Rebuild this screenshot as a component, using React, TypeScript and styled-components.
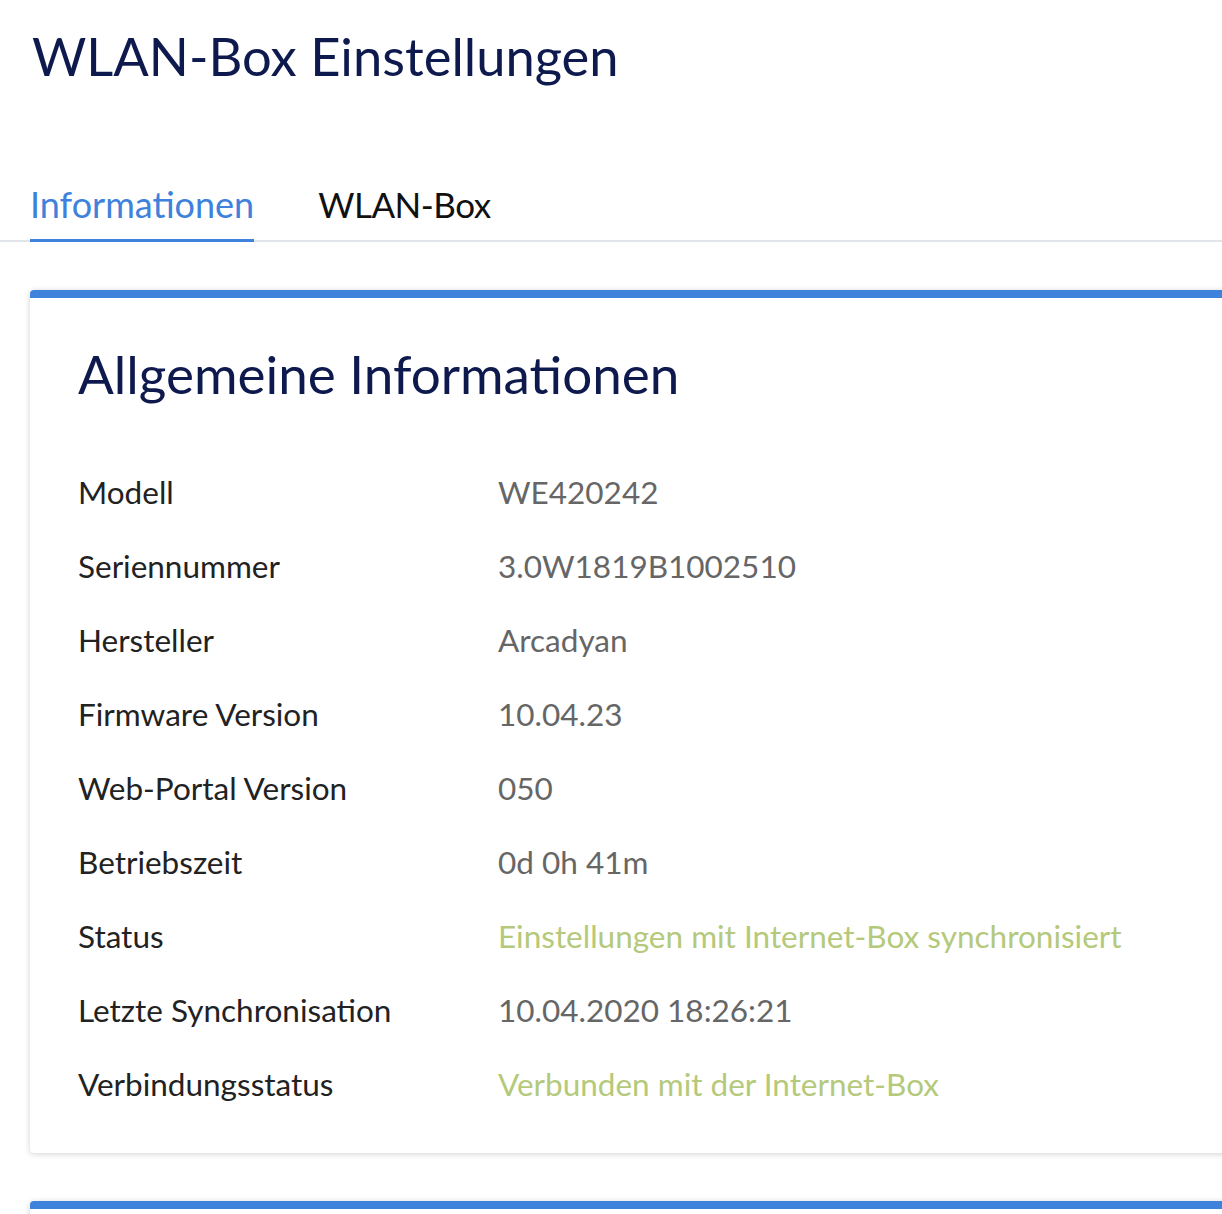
import React from "react";
import styled, { createGlobalStyle } from "styled-components";

const Global = createGlobalStyle`
  html, body { margin: 0; padding: 0; background: #fff; }
  body { font-family: Lato, "Open Sans", sans-serif; overflow: hidden; }
`;

const Page = styled.div`
  width: 100%;
  overflow: hidden;
`;

const Title = styled.h1`
  margin: 0;
  padding: 22px 0 0 32px;
  font-weight: 400;
  font-size: 52.5px;
  line-height: 68px;
  color: #0e1a4d;
`;

const TabBar = styled.div`
  display: flex;
  gap: 64px;
  margin-top: 92px;
  padding-left: 30px;
  border-bottom: 2px solid #e1e4e8;
`;

const Tab = styled.div<{ $active?: boolean }>`
  font-size: ${(p) => (p.$active ? "36px" : "35px")};
  line-height: 44px;
  padding-bottom: 13px;
  margin-bottom: -2px;
  color: ${(p) => (p.$active ? "#3e82dc" : "#111")};
  border-bottom: 3px solid ${(p) => (p.$active ? "#3e82dc" : "transparent")};
  letter-spacing: ${(p) => (p.$active ? "0" : "-0.5px")};
`;

const Card = styled.section`
  margin: 48px -40px 0 30px;
  background: #fff;
  border-top: 8px solid #3e82dc;
  border-radius: 4px;
  box-shadow: 0 1px 6px rgba(0, 0, 0, 0.18);
  padding: 40px 48px 49px;
`;

const NextCard = styled(Card)`
  margin-top: 48px;
  height: 40px;
  padding: 0;
`;

const CardTitle = styled.h2`
  margin: 0 0 62px;
  font-weight: 400;
  font-size: 53px;
  line-height: 72px;
  color: #0e1a4d;
`;

const Rows = styled.dl`
  margin: 0;
  display: grid;
  grid-template-columns: 420px 1fr;
  row-gap: 34px;
`;

const Label = styled.dt`
  font-size: 31.5px;
  line-height: 40px;
  color: #222;
`;

const Value = styled.dd<{ $ok?: boolean }>`
  margin: 0;
  font-size: 31.5px;
  line-height: 40px;
  color: ${(p) => (p.$ok ? "#b5c97b" : "#666")};
`;

const data: [string, string, boolean?][] = [
  ["Modell", "WE420242"],
  ["Seriennummer", "3.0W1819B1002510"],
  ["Hersteller", "Arcadyan"],
  ["Firmware Version", "10.04.23"],
  ["Web-Portal Version", "050"],
  ["Betriebszeit", "0d 0h 41m"],
  ["Status", "Einstellungen mit Internet-Box synchronisiert", true],
  ["Letzte Synchronisation", "10.04.2020 18:26:21"],
  ["Verbindungsstatus", "Verbunden mit der Internet-Box", true],
];

export default function App() {
  return (
    <Page>
      <Global />
      <Title>WLAN-Box Einstellungen</Title>
      <TabBar>
        <Tab $active>Informationen</Tab>
        <Tab>WLAN-Box</Tab>
      </TabBar>
      <Card>
        <CardTitle>Allgemeine Informationen</CardTitle>
        <Rows>
          {data.map(([l, v, ok]) => (
            <React.Fragment key={l}>
              <Label>{l}</Label>
              <Value $ok={ok}>{v}</Value>
            </React.Fragment>
          ))}
        </Rows>
      </Card>
      <NextCard />
    </Page>
  );
}
